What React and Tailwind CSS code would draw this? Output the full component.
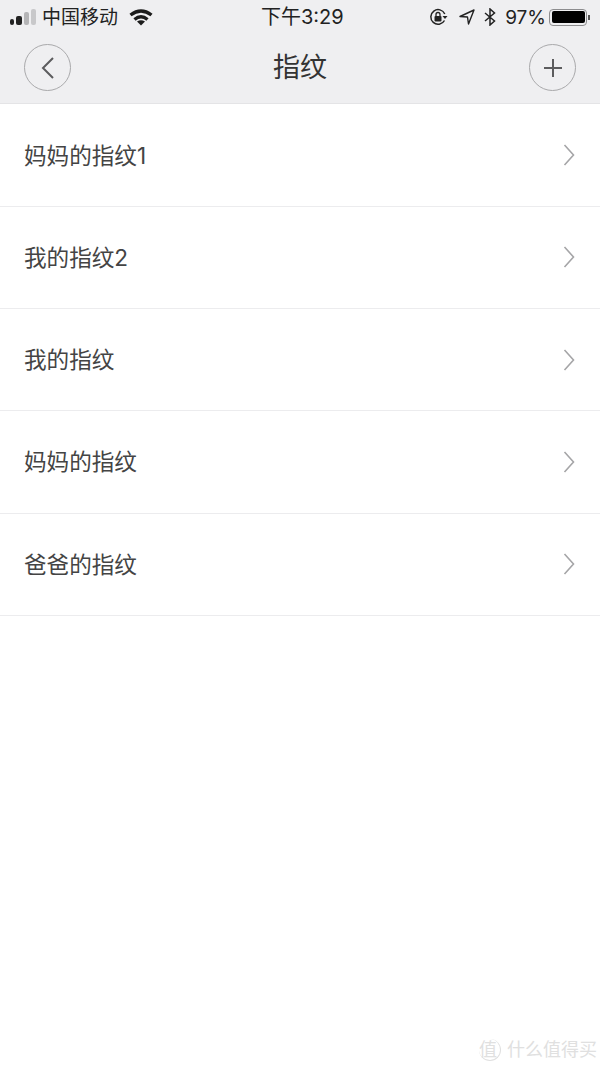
const rows = ["妈妈的指纹1", "我的指纹2", "我的指纹", "妈妈的指纹", "爸爸的指纹"];

const font = "font-['Inter','Noto_Sans_CJK_SC',sans-serif]";

const Signal = () => (
  <div className="flex items-end gap-[2px] w-[26px] h-[16px]">
    <span className="w-[4px] h-[6px] rounded-[2px] bg-[#222]" />
    <span className="w-[6px] h-[9px] rounded-[2px] bg-[#222]" />
    <span className="w-[5px] h-[13px] rounded-[2px] bg-[#b4b4b6]" />
    <span className="w-[5px] h-[16px] rounded-[2px] bg-[#c8c8ca]" />
  </div>
);

const Wifi = () => (
  <svg width="24" height="17" viewBox="0 0 24 17" fill="none" stroke="#1c1c1c" strokeWidth="3.4">
    <path d="M1.5 6 Q12 -2 22.5 6" />
    <path d="M5.5 10.5 Q12 5 18.5 10.5" />
    <path d="M12 16.5 L8 12.5 Q12 10 16 12.5 Z" fill="#1c1c1c" stroke="none" />
  </svg>
);

const RotationLock = () => (
  <svg width="19" height="18" viewBox="0 0 19 18" fill="none">
    <path d="M15.5 12.5 A7.3 7.3 0 1 1 15.8 6" stroke="#222" strokeWidth="1.5" />
    <path d="M13.5 8 L18.5 8 L16 11 Z" fill="#222" />
    <rect x="5.5" y="8" width="7" height="5.5" rx="1" fill="#222" />
    <path d="M7 8 V6.5 A2 2 0 0 1 11 6.5 V8" stroke="#222" strokeWidth="1.3" />
  </svg>
);

const LocationArrow = () => (
  <svg width="16" height="16" viewBox="0 0 16 16" fill="none" stroke="#222" strokeWidth="1.4" strokeLinejoin="round">
    <path d="M1 7.5 L15 1 L9.5 15 L8.5 8 Z" />
  </svg>
);

const Bluetooth = () => (
  <svg width="12" height="18" viewBox="0 0 12 18" fill="none" stroke="#222" strokeWidth="1.5">
    <path d="M1 5 L10.5 13 L6 17 V1 L10.5 5 L1 13" />
  </svg>
);

const Battery = () => (
  <div className="flex items-center gap-[1px]">
    <div className="w-[38px] h-[17px] rounded-[4px] border border-[#8d8d8f] p-[1.5px]">
      <div className="w-full h-full rounded-[2px] bg-black" />
    </div>
    <span className="w-[1.5px] h-[5px] bg-[#555]" />
  </div>
);

const StatusBar = () => (
  <div className="relative h-[34px] flex items-center justify-between pl-[10px] pr-[10.5px] text-[#222]">
    <div className="flex items-center">
      <Signal />
      <span className="ml-[6px] text-[19px] leading-none">中国移动</span>
      <span className="ml-[11px] flex"><Wifi /></span>
    </div>
    {/* time sits centred over the bar */}
    <span className="absolute left-[261px] top-[6px] text-[20px] leading-[22px]">下午3:29</span>
    <div className="flex items-center">
      <RotationLock />
      <span className="ml-[11px] flex"><LocationArrow /></span>
      <span className="ml-[9px] flex"><Bluetooth /></span>
      <span className="ml-[9px] text-[19px] leading-none">97%</span>
      <span className="ml-[3px] flex"><Battery /></span>
    </div>
  </div>
);

const CircleButton = ({ children }) => (
  <button className="w-[47px] h-[47px] rounded-full border border-[#a9a9ab] flex items-center justify-center">
    {children}
  </button>
);

const Header = () => (
  <div className="bg-[#efeff1] border-b border-[#e4e4e6]">
    <StatusBar />
    <div className="h-[69px] flex items-start justify-between px-[24px] pt-[10px]">
      <CircleButton>
        <svg width="16" height="24" viewBox="0 0 16 24" fill="none" stroke="#5c5c5e" strokeWidth="2">
          <path d="M13 2 L3 12 L13 22" />
        </svg>
      </CircleButton>
      <span className="text-[27px] leading-[47px] text-[#333]">指纹</span>
      <CircleButton>
        <svg width="20" height="20" viewBox="0 0 20 20" fill="none" stroke="#5c5c5e" strokeWidth="2">
          <path d="M10 1 V19 M1 10 H19" />
        </svg>
      </CircleButton>
    </div>
  </div>
);

const Row = ({ label }) => (
  <div className="h-[102.25px] flex items-center justify-between pl-[24px] pr-[25.5px] border-b border-[#ececee]">
    <span className="mt-[1px] text-[22.6px] leading-[24px] text-[#444]">{label}</span>
    <svg width="12" height="24" viewBox="0 0 12 24" fill="none" stroke="#a5a5a7" strokeWidth="1.6">
      <path d="M1.5 2 L10.5 12 L1.5 22" />
    </svg>
  </div>
);

const Watermark = () => (
  <div className="absolute right-[3px] bottom-[6px] flex items-center text-[#e0e0e0]">
    <span className="w-[22px] h-[22px] rounded-full border-r border-b border-[#e0e0e0] text-[18px] leading-[21px]">值</span>
    <span className="ml-[6px] text-[18px] leading-none">什么值得买</span>
  </div>
);

export default function App() {
  return (
    <div className={`${font} relative w-[600px] h-[1067px] bg-white overflow-hidden`}>
      <Header />
      <div className="pt-[0.55px]">
        {rows.map((label) => (
          <Row key={label} label={label} />
        ))}
      </div>
      <Watermark />
    </div>
  );
}
